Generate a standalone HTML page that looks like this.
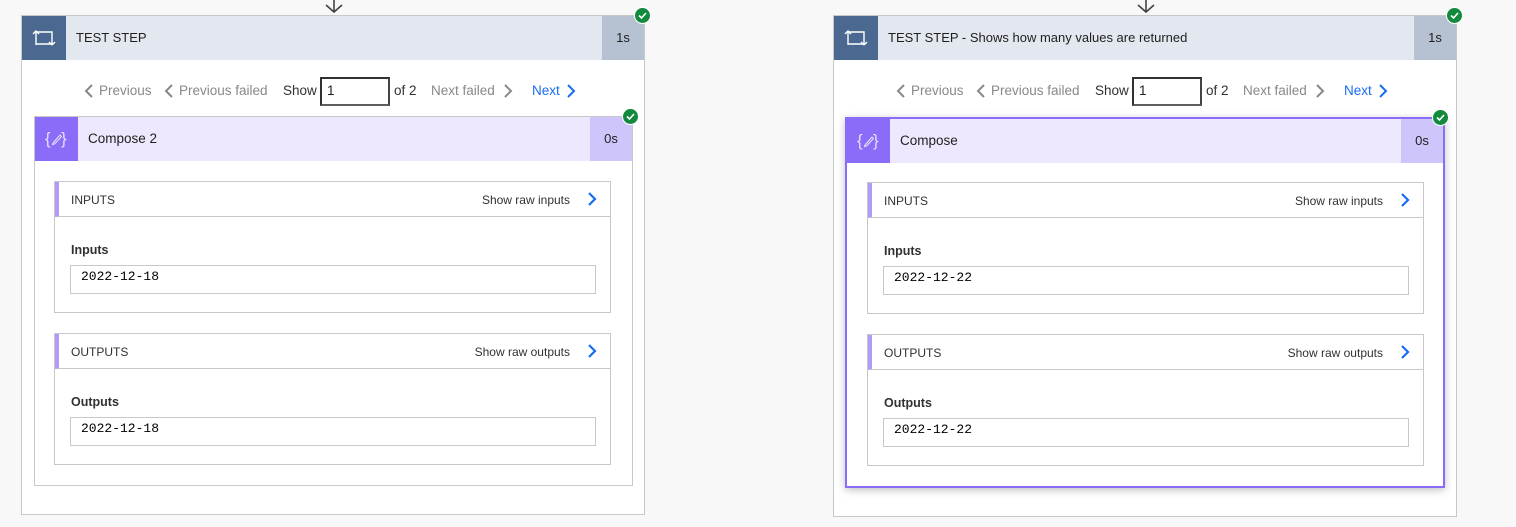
<!DOCTYPE html>
<html><head><meta charset="utf-8"><style>
*{box-sizing:border-box;margin:0;padding:0}
body{width:1516px;height:527px;background:#f8f8f8;position:relative;overflow:hidden;font-family:"Liberation Sans",sans-serif;color:#323130}
.abs{position:absolute}
.panel{position:absolute;top:15px;width:624px;background:#fff;border:1px solid #c8c8c8}
.hdr{position:absolute;left:0;top:0;right:0;height:44px;background:#e3e7ef}
.hico{position:absolute;left:0;top:0;width:44px;height:44px;background:#4b6890}
.htitle{position:absolute;left:54px;top:14px;font-size:13px;color:#201f1e}
.dur{position:absolute;right:0;top:0;width:42px;height:44px;background:#b6c2d1;font-size:13px;text-align:center;line-height:44px;color:#201f1e}
.chk{position:absolute;width:17px;height:17px;border-radius:50%;background:#128a3e;border:1px solid #fff}
.nav{position:absolute;top:60px;height:30px;font-size:13.5px;color:#8a8886;line-height:30px}
.nav span{position:absolute;white-space:nowrap}
.nav svg{position:absolute;top:8px}
.inp{position:absolute;top:0;width:70px;height:29px;border:2px solid #323130;border-bottom-color:#605e5c;border-right-color:#444;background:#fff;font-size:13.5px;color:#201f1e;padding-left:5px;line-height:24px}
.card{position:absolute;width:599px;background:#fff;border:1px solid #c8c8c8}
.chdr{position:absolute;left:0;top:0;right:0;height:44px;background:#ede8fd}
.cico{position:absolute;left:0;top:0;width:43px;height:44px;background:#8b6cf8}
.ctitle{position:absolute;left:53px;top:14px;font-size:13.5px;color:#201f1e}
.cdur{position:absolute;right:0;top:0;width:42px;height:44px;background:#cec6fb;font-size:13px;text-align:center;line-height:44px;color:#201f1e}
.sec{position:absolute;left:20px;width:557px;height:132px;border:1px solid #c8c8c8;background:#fff}
.shdr{position:absolute;left:0;top:0;right:0;height:35px;border-bottom:1px solid #c8c8c8;border-left:4px solid #b09cf8}
.sname{position:absolute;left:12px;top:11px;font-size:12px;color:#323130}
.raw{position:absolute;right:40px;top:11px;font-size:12px;color:#323130}
.lbl{position:absolute;left:16px;top:61px;font-size:12.5px;font-weight:bold;color:#323130}
.box{position:absolute;left:15px;top:83px;width:526px;height:29px;border:1px solid #c8c8c8;font-family:"Liberation Mono",monospace;font-size:13px;color:#000;padding:3px 0 0 10px}
</style></head><body>

<svg class="abs" style="left:323px;top:0" width="22" height="14"><path d="M11 0V12M3 5L11 12L19 5" stroke="#444" stroke-width="1.6" fill="none"/></svg>
<svg class="abs" style="left:1135px;top:0" width="22" height="14"><path d="M11 0V12M3 5L11 12L19 5" stroke="#444" stroke-width="1.6" fill="none"/></svg>

<!-- LEFT PANEL -->
<div class="panel" style="left:21px;height:500px">
 <div class="hdr"></div>
 <div class="hico"><svg width="44" height="44"><path d="M14 29V15M11 18L14 15L17 18M14 16H30V28M30 29L33 26M30 29L27 26M30 28H14" stroke="#fff" stroke-width="1.4" fill="none"/></svg></div>
 <div class="htitle">TEST STEP</div>
 <div class="dur">1s</div>
 <div class="nav" style="left:0;width:622px">
  <svg style="left:62px" width="10" height="14"><path d="M8 1L2 7L8 13" stroke="#8a8886" stroke-width="2" fill="none"/></svg><span style="left:77px">Previous</span>
  <svg style="left:142px" width="10" height="14"><path d="M8 1L2 7L8 13" stroke="#8a8886" stroke-width="2" fill="none"/></svg><span style="left:157px">Previous failed</span>
  <span style="left:261px;color:#323130">Show</span>
  <div class="inp" style="left:298px;top:1px">1</div>
  <span style="left:372px;color:#323130">of 2</span>
  <span style="left:409px">Next failed</span><svg style="left:481px" width="10" height="14"><path d="M2 1L8 7L2 13" stroke="#8a8886" stroke-width="2" fill="none"/></svg>
  <span style="left:510px;color:#1a6cf0">Next</span><svg style="left:544px" width="10" height="14"><path d="M2 1L8 7L2 13" stroke="#1a6cf0" stroke-width="2" fill="none"/></svg>
 </div>
 <div class="card" style="left:12px;top:100px;height:370px">
  <div class="chdr"></div>
  <div class="cico"><svg width="43" height="44"><text x="10" y="27" fill="#e6defe" font-size="17" font-family="Liberation Sans">{</text><text x="26" y="27" fill="#e6defe" font-size="17" font-family="Liberation Sans">}</text><path d="M18 26L25 18L26.5 19.5L19.5 27L17.5 27.5Z" stroke="#e6defe" stroke-width="1.1" fill="none"/></svg></div>
  <div class="ctitle">Compose 2</div>
  <div class="cdur">0s</div>
  <div class="sec" style="top:64px;left:19px">
   <div class="shdr"><div class="sname">INPUTS</div><div class="raw">Show raw inputs</div>
    <svg class="abs" style="right:12px;top:9px" width="12" height="16"><path d="M3 2L9 8L3 14" stroke="#1a6cf0" stroke-width="2.2" fill="none"/></svg></div>
   <div class="lbl">Inputs</div><div class="box">2022-12-18</div>
  </div>
  <div class="sec" style="top:216px;left:19px">
   <div class="shdr"><div class="sname">OUTPUTS</div><div class="raw">Show raw outputs</div>
    <svg class="abs" style="right:12px;top:9px" width="12" height="16"><path d="M3 2L9 8L3 14" stroke="#1a6cf0" stroke-width="2.2" fill="none"/></svg></div>
   <div class="lbl">Outputs</div><div class="box">2022-12-18</div>
  </div>
 </div>
</div>
<div class="chk" style="left:634px;top:7px"><svg width="15" height="15"><path d="M4 7.5L6.5 10L11 5" stroke="#fff" stroke-width="1.6" fill="none"/></svg></div>
<div class="chk" style="left:622px;top:108px"><svg width="15" height="15"><path d="M4 7.5L6.5 10L11 5" stroke="#fff" stroke-width="1.6" fill="none"/></svg></div>

<!-- RIGHT PANEL -->
<div class="panel" style="left:833px;height:502px">
 <div class="hdr"></div>
 <div class="hico"><svg width="44" height="44"><path d="M14 29V15M11 18L14 15L17 18M14 16H30V28M30 29L33 26M30 29L27 26M30 28H14" stroke="#fff" stroke-width="1.4" fill="none"/></svg></div>
 <div class="htitle">TEST STEP - Shows how many values are returned</div>
 <div class="dur">1s</div>
 <div class="nav" style="left:0;width:622px">
  <svg style="left:62px" width="10" height="14"><path d="M8 1L2 7L8 13" stroke="#8a8886" stroke-width="2" fill="none"/></svg><span style="left:77px">Previous</span>
  <svg style="left:142px" width="10" height="14"><path d="M8 1L2 7L8 13" stroke="#8a8886" stroke-width="2" fill="none"/></svg><span style="left:157px">Previous failed</span>
  <span style="left:261px;color:#323130">Show</span>
  <div class="inp" style="left:298px;top:1px">1</div>
  <span style="left:372px;color:#323130">of 2</span>
  <span style="left:409px">Next failed</span><svg style="left:481px" width="10" height="14"><path d="M2 1L8 7L2 13" stroke="#8a8886" stroke-width="2" fill="none"/></svg>
  <span style="left:510px;color:#1a6cf0">Next</span><svg style="left:544px" width="10" height="14"><path d="M2 1L8 7L2 13" stroke="#1a6cf0" stroke-width="2" fill="none"/></svg>
 </div>
 <div class="card" style="left:11px;top:101px;width:600px;height:371px;border:2px solid #8b6cf8;box-shadow:0 2px 8px rgba(0,0,0,0.25)">
  <div class="chdr"></div>
  <div class="cico"><svg width="43" height="44"><text x="10" y="27" fill="#e6defe" font-size="17" font-family="Liberation Sans">{</text><text x="26" y="27" fill="#e6defe" font-size="17" font-family="Liberation Sans">}</text><path d="M18 26L25 18L26.5 19.5L19.5 27L17.5 27.5Z" stroke="#e6defe" stroke-width="1.1" fill="none"/></svg></div>
  <div class="ctitle">Compose</div>
  <div class="cdur">0s</div>
  <div class="sec" style="top:63px">
   <div class="shdr"><div class="sname">INPUTS</div><div class="raw">Show raw inputs</div>
    <svg class="abs" style="right:12px;top:9px" width="12" height="16"><path d="M3 2L9 8L3 14" stroke="#1a6cf0" stroke-width="2.2" fill="none"/></svg></div>
   <div class="lbl">Inputs</div><div class="box">2022-12-22</div>
  </div>
  <div class="sec" style="top:215px">
   <div class="shdr"><div class="sname">OUTPUTS</div><div class="raw">Show raw outputs</div>
    <svg class="abs" style="right:12px;top:9px" width="12" height="16"><path d="M3 2L9 8L3 14" stroke="#1a6cf0" stroke-width="2.2" fill="none"/></svg></div>
   <div class="lbl">Outputs</div><div class="box">2022-12-22</div>
  </div>
 </div>
</div>
<div class="chk" style="left:1446px;top:7px"><svg width="15" height="15"><path d="M4 7.5L6.5 10L11 5" stroke="#fff" stroke-width="1.6" fill="none"/></svg></div>
<div class="chk" style="left:1432px;top:109px"><svg width="15" height="15"><path d="M4 7.5L6.5 10L11 5" stroke="#fff" stroke-width="1.6" fill="none"/></svg></div>

</body></html>
